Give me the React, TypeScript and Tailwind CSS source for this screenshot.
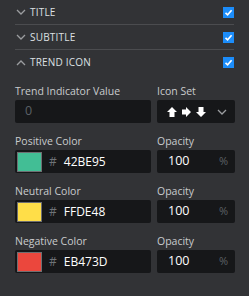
import React from "react";

function Chevron({ up = false }: { up?: boolean }) {
  return (
    <svg width="10" height="6" viewBox="0 0 10 6" className="shrink-0">
      <path
        d={up ? "M1 5 L5 1 L9 5" : "M1 1 L5 5 L9 1"}
        fill="none"
        stroke="#9b9da0"
        strokeWidth="1.3"
      />
    </svg>
  );
}

function Check() {
  return (
    <div className="w-[11px] h-[11px] bg-[#1c8dfa] flex items-center justify-center">
      <svg width="9" height="9" viewBox="0 0 9 9">
        <path d="M1.5 4.8 L3.6 6.8 L7.6 2.2" fill="none" stroke="#ffffff" strokeWidth="1.6" />
      </svg>
    </div>
  );
}

function Header({ label, up = false, divider = true }: { label: string; up?: boolean; divider?: boolean }) {
  return (
    <div className={`h-[25px] flex items-center pl-[1px] ${divider ? "border-b border-[#4b4c4f]" : ""}`}>
      <Chevron up={up} />
      <span className="ml-[4px] text-[10px] text-[#dde0e3] tracking-[0.2px] flex-1">{label}</span>
      <Check />
    </div>
  );
}

function Arrows() {
  return (
    <svg width="40" height="10" viewBox="0 0 40 10">
      {/* up */}
      <path d="M5 0 L10 5 L7.5 5 L7.5 10 L2.5 10 L2.5 5 L0 5 Z" fill="#ffffff" />
      {/* right */}
      <path d="M24 5 L19 0 L19 2.5 L15 2.5 L15 7.5 L19 7.5 L19 10 Z" fill="#ffffff" />
      {/* down */}
      <path d="M34 10 L39 5 L36.5 5 L36.5 0 L31.5 0 L31.5 5 L29 5 Z" fill="#ffffff" />
    </svg>
  );
}

function ColorRow({ label, hex }: { label: string; hex: string }) {
  return (
    <div className="grid grid-cols-[136px_78px] gap-x-[6px]">
      <div className="h-[17px] text-[10.5px] text-[#c9cbcd] leading-[17px]">{label}</div>
      <div className="h-[17px] text-[10.5px] text-[#c9cbcd] leading-[17px]">Opacity</div>
      <div className="h-[23px] bg-[#161719] rounded-[2px] flex items-center pl-[2px]">
        <div className="w-[25px] h-[20px] border border-[#6e6f72]" style={{ backgroundColor: `#${hex}` }} />
        <span className="ml-[7px] text-[12px] text-[#6f7378]">#</span>
        <span className="ml-[7px] text-[12px] text-white">{hex}</span>
      </div>
      <div className="h-[23px] bg-[#161719] rounded-[2px] flex items-center pl-[11px] pr-[7px]">
        <span className="text-[12.5px] text-white flex-1">100</span>
        <span className="text-[11px] text-[#5d6166]">%</span>
      </div>
    </div>
  );
}

export default function App() {
  return (
    <div className="w-[249px] h-[296px] bg-[#323336] px-[15px] font-['Open_Sans',sans-serif] overflow-hidden">
      <Header label="TITLE" />
      <Header label="SUBTITLE" />
      <Header label="TREND ICON" up divider={false} />

      <div className="flex flex-col gap-[10px] mt-[8px]">
        <div className="grid grid-cols-[136px_78px] gap-x-[6px]">
          <div className="h-[17px] text-[10.5px] text-[#c9cbcd] leading-[17px]">Trend Indicator Value</div>
          <div className="h-[17px] text-[10.5px] text-[#c9cbcd] leading-[17px]">Icon Set</div>
          <div className="h-[23px] bg-[#161719] rounded-[2px] flex items-center pl-[10px]">
            <span className="text-[12.5px] text-[#5b6066]">0</span>
          </div>
          <div className="h-[23px] bg-[#161719] rounded-[2px] flex items-center pl-[10px] pr-[8px]">
            <div className="flex-1 flex">
              <Arrows />
            </div>
            <Chevron />
          </div>
        </div>
        <ColorRow label="Positive Color" hex="42BE95" />
        <ColorRow label="Neutral Color" hex="FFDE48" />
        <ColorRow label="Negative Color" hex="EB473D" />
      </div>
    </div>
  );
}
